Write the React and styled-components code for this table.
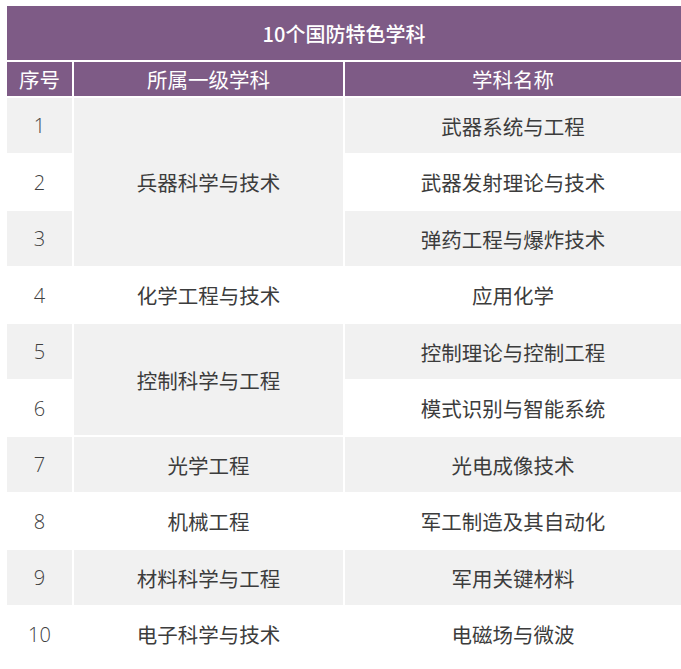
import React from "react";
import styled, { createGlobalStyle } from "styled-components";

const GlobalStyle = createGlobalStyle`
  html, body {
    margin: 0;
    padding: 0;
    background: #ffffff;
  }
  body {
    font-family: "Noto Sans CJK SC", "Noto Sans", "Liberation Sans", sans-serif;
  }
`;

const rows = [
  { no: 1, name: "武器系统与工程" },
  { no: 2, name: "武器发射理论与技术" },
  { no: 3, name: "弹药工程与爆炸技术" },
  { no: 4, name: "应用化学" },
  { no: 5, name: "控制理论与控制工程" },
  { no: 6, name: "模式识别与智能系统" },
  { no: 7, name: "光电成像技术" },
  { no: 8, name: "军工制造及其自动化" },
  { no: 9, name: "军用关键材料" },
  { no: 10, name: "电磁场与微波" },
];

// first-level discipline groups: start row (1-based), span
const groups = [
  { start: 1, span: 3, name: "兵器科学与技术", shaded: true },
  { start: 4, span: 1, name: "化学工程与技术", shaded: false },
  { start: 5, span: 2, name: "控制科学与工程", shaded: true },
  { start: 7, span: 1, name: "光学工程", shaded: true },
  { start: 8, span: 1, name: "机械工程", shaded: false },
  { start: 9, span: 1, name: "材料科学与工程", shaded: true },
  { start: 10, span: 1, name: "电子科学与技术", shaded: false },
];

const Table = styled.div`
  display: grid;
  grid-template-columns: 65px 269px 1fr;
  grid-template-rows: 54px 34px repeat(10, 54.5px);
  gap: 2px;
  margin: 6px 0 0 7px;
  background: #ffffff;
`;

const Title = styled.div`
  grid-column: 1 / -1;
  grid-row: 1;
  background: #7e5b86;
  color: #ffffff;
  font-size: 20px;
  font-weight: 500;
  display: flex;
  align-items: center;
  justify-content: center;
`;

const HeadCell = styled.div`
  grid-row: 2;
  background: #7e5b86;
  color: #ffffff;
  font-size: 20.5px;
  display: flex;
  align-items: center;
  justify-content: center;
`;

const Cell = styled.div`
  grid-column: ${(p) => p.$col};
  grid-row: ${(p) => p.$row} / span ${(p) => p.$span || 1};
  background: ${(p) => (p.$shaded ? "#f1f1f1" : "#ffffff")};
  color: #3c3c3c;
  font-size: 20.5px;
  display: flex;
  align-items: center;
  justify-content: center;
  padding-top: 1px;
`;

const NumText = styled.span`
  font-family: "Open Sans", "Noto Sans", sans-serif;
  font-size: 20px;
  font-weight: 300;
  color: #404040;
`;

export default function App() {
  return (
    <>
      <GlobalStyle />
      <Table>
        <Title>10个国防特色学科</Title>
        <HeadCell>序号</HeadCell>
        <HeadCell>所属一级学科</HeadCell>
        <HeadCell>学科名称</HeadCell>
        {rows.map((r, i) => (
          <Cell key={"n" + r.no} $col={1} $row={i + 3} $shaded={i % 2 === 0}>
            <NumText>{r.no}</NumText>
          </Cell>
        ))}
        {groups.map((g) => (
          <Cell key={g.name} $col={2} $row={g.start + 2} $span={g.span} $shaded={g.shaded}>
            {g.name}
          </Cell>
        ))}
        {rows.map((r, i) => (
          <Cell key={"s" + r.no} $col={3} $row={i + 3} $shaded={i % 2 === 0}>
            {r.name}
          </Cell>
        ))}
      </Table>
    </>
  );
}
